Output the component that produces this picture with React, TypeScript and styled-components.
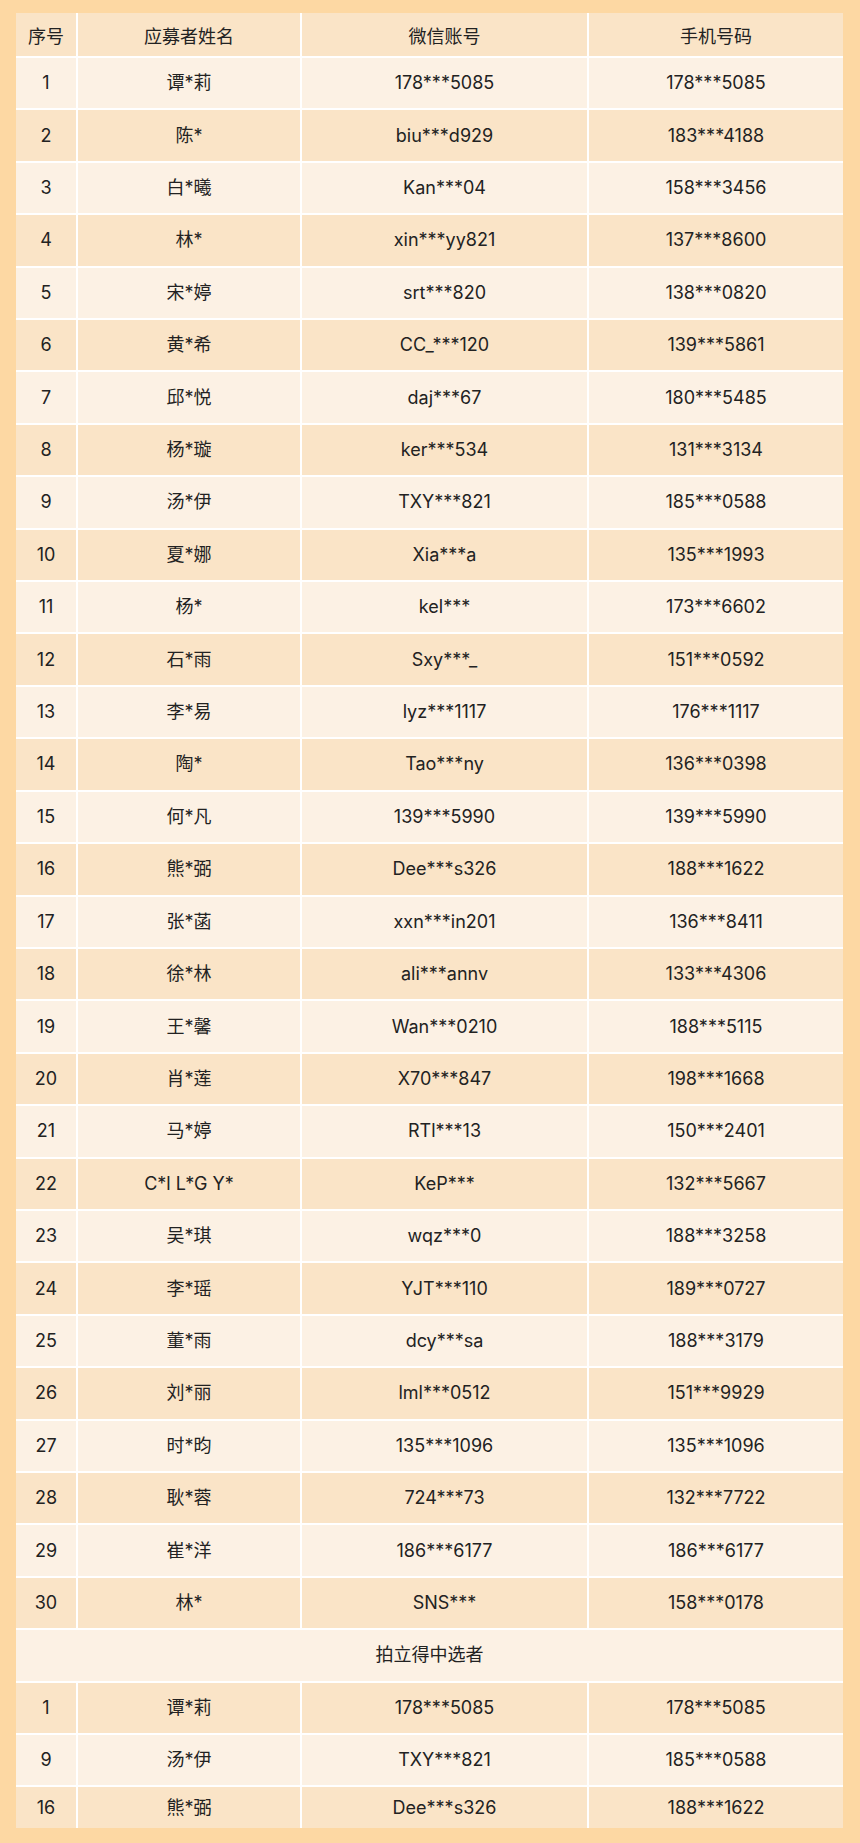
import React, { FC } from 'react';
import styled, { createGlobalStyle } from 'styled-components';

const GlobalStyle = createGlobalStyle`
	html,
	body {
		margin: 0;
		padding: 0;
		background: #fdd8a3;
	}
`;

const Page = styled.div`
	box-sizing: border-box;
	min-height: 100vh;
	padding: 13px 17px 14px 16px;
	background: #fdd8a3;
	font-family: Inter, 'Noto Sans CJK SC', sans-serif;
	color: #222;
`;

const Table = styled.table`
	width: 100%;
	border-collapse: collapse;
	border-style: hidden;
	table-layout: fixed;
	font-size: 18px;
`;

const HeadCell = styled.th<{ width?: number }>`
	height: 43px;
	padding: 0;
	border: 2px solid #fff;
	background: #fae4c7;
	font-weight: 400;
	text-align: center;
	width: ${({ width }) => (width ? `${width}px` : 'auto')};
`;

const Row = styled.tr`
	&:nth-child(odd) td {
		background: #fcf1e4;
	}
	&:nth-child(even) td {
		background: #fae4c7;
	}
	&:last-child td {
		height: 41px;
	}
`;

const Cell = styled.td`
	height: 50.42px;
	padding: 0;
	border: 2px solid #fff;
	text-align: center;
	line-height: 1;
`;

type Entry = [string, string, string, string];

const applicants: Entry[] = [
	['1', '谭*莉', '178***5085', '178***5085'],
	['2', '陈*', 'biu***d929', '183***4188'],
	['3', '白*曦', 'Kan***04', '158***3456'],
	['4', '林*', 'xin***yy821', '137***8600'],
	['5', '宋*婷', 'srt***820', '138***0820'],
	['6', '黄*希', 'CC_***120', '139***5861'],
	['7', '邱*悦', 'daj***67', '180***5485'],
	['8', '杨*璇', 'ker***534', '131***3134'],
	['9', '汤*伊', 'TXY***821', '185***0588'],
	['10', '夏*娜', 'Xia***a', '135***1993'],
	['11', '杨*', 'kel***', '173***6602'],
	['12', '石*雨', 'Sxy***_', '151***0592'],
	['13', '李*易', 'lyz***1117', '176***1117'],
	['14', '陶*', 'Tao***ny', '136***0398'],
	['15', '何*凡', '139***5990', '139***5990'],
	['16', '熊*弼', 'Dee***s326', '188***1622'],
	['17', '张*菡', 'xxn***in201', '136***8411'],
	['18', '徐*林', 'ali***annv', '133***4306'],
	['19', '王*馨', 'Wan***0210', '188***5115'],
	['20', '肖*莲', 'X70***847', '198***1668'],
	['21', '马*婷', 'RTl***13', '150***2401'],
	['22', 'C*l L*G Y*', 'KeP***', '132***5667'],
	['23', '吴*琪', 'wqz***0', '188***3258'],
	['24', '李*瑶', 'YJT***110', '189***0727'],
	['25', '董*雨', 'dcy***sa', '188***3179'],
	['26', '刘*丽', 'lml***0512', '151***9929'],
	['27', '时*昀', '135***1096', '135***1096'],
	['28', '耿*蓉', '724***73', '132***7722'],
	['29', '崔*洋', '186***6177', '186***6177'],
	['30', '林*', 'SNS***', '158***0178'],
];

const winners: Entry[] = [
	['1', '谭*莉', '178***5085', '178***5085'],
	['9', '汤*伊', 'TXY***821', '185***0588'],
	['16', '熊*弼', 'Dee***s326', '188***1622'],
];

const EntryRow: FC<{ entry: Entry }> = ({ entry }) => (
	<Row>
		{entry.map((value, index) => (
			<Cell key={index}>{value}</Cell>
		))}
	</Row>
);

const App: FC = () => (
	<>
		<GlobalStyle />
		<Page>
			<Table>
				<thead>
					<tr>
						<HeadCell width={60}>序号</HeadCell>
						<HeadCell width={222}>应募者姓名</HeadCell>
						<HeadCell width={285}>微信账号</HeadCell>
						<HeadCell>手机号码</HeadCell>
					</tr>
				</thead>
				<tbody>
					{applicants.map((entry) => (
						<EntryRow key={`a-${entry[0]}`} entry={entry} />
					))}
					<Row>
						<Cell colSpan={4}>拍立得中选者</Cell>
					</Row>
					{winners.map((entry) => (
						<EntryRow key={`w-${entry[0]}`} entry={entry} />
					))}
				</tbody>
			</Table>
		</Page>
	</>
);

export default App;
